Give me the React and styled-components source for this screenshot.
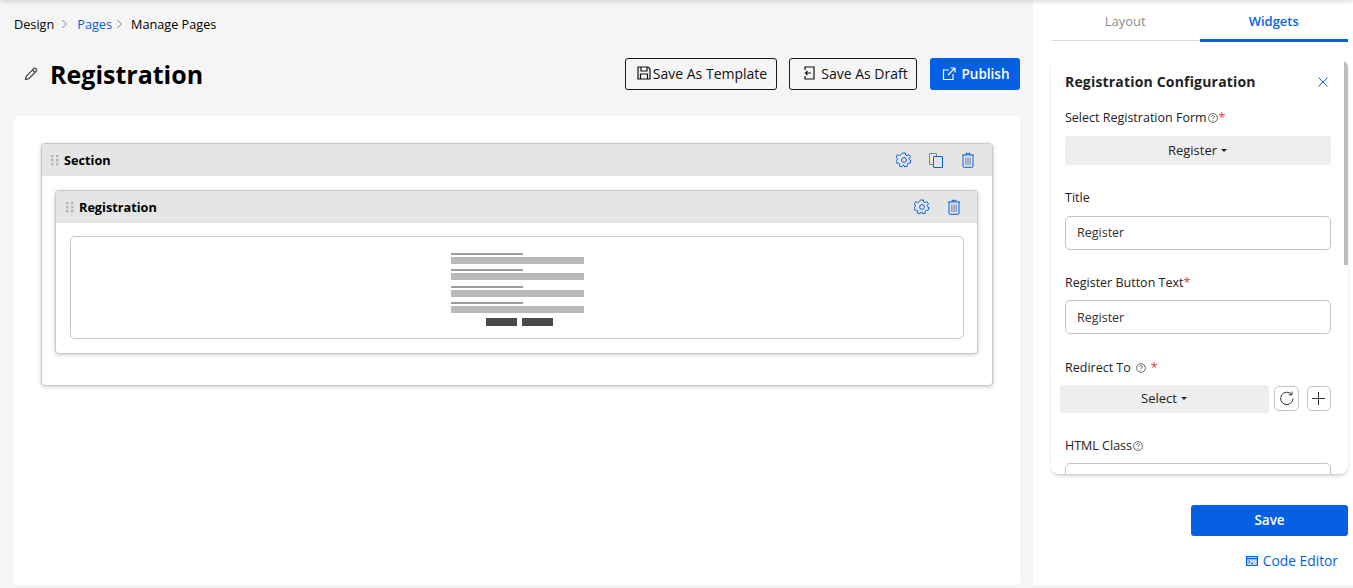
import React from 'react';
import styled, { createGlobalStyle } from 'styled-components';

const blue = '#0560e3';

const Global = createGlobalStyle`
  html, body { margin: 0; padding: 0; height: 100%; overflow: hidden; }
  body { font-family: "Open Sans", "Noto Sans", sans-serif; background: #f5f5f5; color: #000; }
  * { box-sizing: border-box; }
`;

const Page = styled.div`
  position: relative;
  display: flex;
  width: 1353px;
  height: 588px;
  overflow: hidden;
  &:before {
    content: '';
    position: absolute;
    top: -4px;
    left: 0;
    right: 0;
    height: 4px;
    box-shadow: 0 1px 5px rgba(0, 0, 0, 0.2);
    z-index: 3;
  }
`;

const Main = styled.main`
  width: 1033px;
  height: 588px;
  padding: 15px 13px 0 14px;
  display: flex;
  flex-direction: column;
`;

const Crumbs = styled.nav`
  display: flex;
  align-items: center;
  height: 18px;
  font-size: 12.7px;
  line-height: 18px;
`;

const Crumb = styled.span`
  color: ${p => (p.$link ? blue : '#000')};
`;

const CrumbGap = styled.svg`
  width: ${p => p.$w}px;
  height: 12px;
  fill: none;
  stroke: #8a8a8a;
  stroke-width: 1;
`;

const TitleRow = styled.div`
  display: flex;
  align-items: center;
  height: 34px;
  margin-top: 24px;
  padding-left: 10px;
`;

const Title = styled.h1`
  margin: 0 0 0 12px;
  font-size: 25px;
  line-height: 34px;
  font-weight: 700;
  flex: 1;
`;

const OutlineBtn = styled.button`
  display: flex;
  align-items: center;
  justify-content: center;
  gap: ${p => p.$gap}px;
  width: ${p => p.$w}px;
  height: 32px;
  margin-right: ${p => p.$mr}px;
  padding: 0 0 2px ${p => p.$pl}px;
  border: 1px solid #1a1a1a;
  border-radius: 3px;
  background: transparent;
  color: #111;
  font: 500 14px "Open Sans", sans-serif;
`;

const PublishBtn = styled.button`
  display: flex;
  align-items: center;
  justify-content: center;
  gap: 6px;
  width: 90px;
  height: 32px;
  padding: 0 0 1px 1px;
  border: 0;
  border-radius: 3px;
  background: ${blue};
  color: #fff;
  font: 600 13.5px "Open Sans", sans-serif;
`;

const Canvas = styled.section`
  margin-top: 25px;
  width: 1006px;
  height: 469px;
  padding: 27px 27px 0;
  background: #fff;
  border-radius: 5px;
`;

const Block = styled.div`
  border: 1px solid #c9c9c9;
  border-radius: 4px;
  background: #fff;
  box-shadow: 0 1px 4px rgba(0, 0, 0, 0.2);
`;

const SectionBlock = styled(Block)`
  width: 952px;
  height: 243px;
`;

const WidgetBlock = styled(Block)`
  width: 923px;
  height: 164px;
  margin: 14px 0 0 13px;
`;

const BlockHead = styled.div`
  display: flex;
  align-items: center;
  height: 32px;
  padding: 0 ${p => p.$right}px 0 ${p => p.$left}px;
  background: #e5e5e5;
  border-radius: 3px 3px 0 0;
`;

const Grip = styled.svg`
  width: 8px;
  height: 12px;
  margin-right: 5px;
  fill: #b4b4b4;
`;

const BlockName = styled.span`
  flex: 1;
  font-size: 12.7px;
  font-weight: 700;
  line-height: 18px;
`;

const HeadIcon = styled.svg`
  width: 16px;
  height: 16px;
  margin-left: 16px;
  fill: none;
  stroke: ${blue};
  stroke-width: 1;
`;

const Preview = styled.div`
  display: flex;
  justify-content: center;
  height: 103px;
  margin: 13px 13px 0 14px;
  padding-top: 16px;
  border: 1px solid #c8c8c8;
  border-radius: 5px;
`;

const Wire = styled.svg`
  width: 133px;
  height: 74px;
`;

const Side = styled.aside`
  width: 320px;
  height: 585px;
  background: #fff;
  padding: 0 5px 0 18px;
  display: flex;
  flex-direction: column;
`;

const Tabs = styled.div`
  display: flex;
  height: 41px;
  border-bottom: 1px solid #dcdcdc;
`;

const Tab = styled.div`
  flex: 1;
  height: 42px;
  padding-top: 12px;
  text-align: center;
  font-size: 13px;
  line-height: 18px;
  font-weight: ${p => (p.$active ? 600 : 400)};
  color: ${p => (p.$active ? blue : '#8b8b8b')};
  border-bottom: ${p => (p.$active ? `3px solid ${blue}` : '0')};
`;

const Config = styled.div`
  position: relative;
  height: 414px;
  margin-top: 19px;
  padding: 13px 17px 0 14px;
  overflow: hidden;
  border-radius: 8px;
  box-shadow: 0 3px 4px -2px rgba(0, 0, 0, 0.28), 0 0 3px rgba(0, 0, 0, 0.05);
`;

const Scroll = styled.div`
  position: absolute;
  top: 0;
  right: 0;
  width: 4px;
  height: 205px;
  background: #bdbdbd;
`;

const ConfigHead = styled.div`
  display: flex;
  align-items: center;
  justify-content: space-between;
  height: 18px;
`;

const ConfigTitle = styled.h2`
  margin: 0;
  font-size: 14px;
  line-height: 18px;
  font-weight: 700;
  letter-spacing: 0.18px;
  color: #222;
`;

const Close = styled.svg`
  width: 12px;
  height: 12px;
  margin-right: 2px;
  fill: none;
  stroke: ${blue};
  stroke-width: 1;
`;

const Label = styled.div`
  display: flex;
  align-items: center;
  height: 18px;
  margin-top: ${p => p.$top}px;
  font-size: 12.5px;
  line-height: 18px;
  color: #222;
`;

const Star = styled.span`
  color: #e8344e;
  margin-left: ${p => p.$left || 0}px;
`;

const Help = styled.svg`
  width: 10px;
  height: 10px;
  margin: ${p => (p.$spaced ? '0 0 0 5px' : '0 0 0 1px')};
  fill: none;
  stroke: #444;
  stroke-width: 0.8;
`;

const Dropdown = styled.div`
  display: flex;
  align-items: center;
  justify-content: center;
  gap: 4px;
  height: ${p => p.$h}px;
  margin-top: ${p => p.$top}px;
  padding: 0 1px 2px 0;
  width: ${p => p.$w};
  flex: ${p => (p.$w ? 'none' : '1')};
  background: #eeeeee;
  border-radius: 3px;
  font-size: 13px;
  color: #222;
  &:after {
    content: '';
    margin-top: 1px;
    border-top: 3px solid #222;
    border-left: 3px solid transparent;
    border-right: 3px solid transparent;
  }
`;

const Input = styled.div`
  height: 34px;
  margin-top: ${p => p.$top}px;
  padding: 0 11px;
  border: 1px solid #c4c4c4;
  border-radius: 5px;
  font-size: 12.5px;
  line-height: ${p => p.$lh || 32}px;
  color: #333;
`;

const SelectRow = styled.div`
  display: flex;
  align-items: flex-start;
  margin: 8px 0 0 -5px;
`;

const SquareBtn = styled.div`
  display: flex;
  align-items: center;
  justify-content: center;
  width: 25px;
  height: 25px;
  margin: 1px 0 0 ${p => p.$left}px;
  border: 1px solid #c4c4c4;
  border-radius: 5px;
`;

const SquareIcon = styled.svg`
  width: 17px;
  height: 17px;
  fill: none;
  stroke: #333;
  stroke-width: 1;
`;

const SaveBtn = styled.button`
  display: block;
  width: 157px;
  height: 31px;
  margin: 31px 0 0 140px;
  padding: 0 0 2px;
  border: 0;
  border-radius: 3px;
  background: ${blue};
  color: #fff;
  font: 600 13.5px "Open Sans", sans-serif;
`;

const CodeLink = styled.div`
  display: flex;
  align-items: center;
  justify-content: flex-end;
  gap: 5px;
  margin-top: 15px;
  padding-right: 10px;
  font-size: 13.8px;
  line-height: 19px;
  font-weight: 500;
  color: ${blue};
`;

const BtnIcon = styled.svg`
  width: ${p => p.$s || 14}px;
  height: ${p => p.$s || 14}px;
  fill: none;
  stroke: currentColor;
  stroke-width: 1.2;
`;

const Pencil = styled.svg`
  width: 14px;
  height: 14px;
  fill: none;
  stroke: #3a3325;
  stroke-width: 1.1;
`;

const GripIcon = () => (
  <Grip viewBox="0 0 8 12">
    {[1, 5, 9].map(y => [1, 6].map(x => <rect key={`${x}-${y}`} x={x - 1} y={y} width="2.4" height="2.4" />))}
  </Grip>
);

const Gear = () => (
  <HeadIcon viewBox="0 0 16 16">
    <circle cx="8" cy="8" r="2.4" />
    <path d="M6.7 1h2.6l.4 2 1.3.6 1.8-1 1.7 2.2-1.3 1.5.2 1.4 1.6 1-.8 2.5-2 0-1 1 .2 2-2.6.7-1-1.8H7l-1.1 1.8-2.5-.8.2-2-1-1-2 .1-.8-2.5 1.6-1.1V6.3L.1 4.9 1.6 2.6l1.9.9 1.1-.6z" strokeLinejoin="round" />
  </HeadIcon>
);

const Copy = () => (
  <HeadIcon viewBox="0 0 16 16">
    <path d="M5 12.500H1.500V1.500h7V4" stroke="#5b84dd" />
    <rect x="5.500" y="4.500" width="9" height="11" rx=".5" />
  </HeadIcon>
);

const Trash = () => (
  <HeadIcon viewBox="0 0 16 16">
    <path d="M2 3h12M6 3V1.300h4V3M3 3v11.200c0 .7.400 1.100 1 1.100h8c.6 0 1-.4 1-1.100V3" />
    <path d="M5.800 5.500v7.500M8 5.500v7.500M10.200 5.500v7.500" stroke="#7a8fc8" strokeWidth="1.3" />
  </HeadIcon>
);

const HelpIcon = ({ spaced }) => (
  <Help viewBox="0 0 10 10" $spaced={spaced}>
    <circle cx="5" cy="5" r="4.400" />
    <path d="M3.600 4c0-1.800 2.900-1.800 2.900-.1 0 1-1.500 1-1.500 2.100M5 7v.8" />
  </Help>
);

const wireRows = [0, 16, 33, 49];

const FormWire = () => (
  <Wire viewBox="0 0 133 74">
    {wireRows.map(y => (
      <g key={y}>
        <rect x="0" y={y} width="72" height="2" fill="#9c9c9c" />
        <rect x="0" y={y + 4} width="133" height="7" fill="#b9b9b9" />
      </g>
    ))}
    <rect x="35" y="65" width="31" height="8" fill="#4a4a4a" />
    <rect x="71" y="65" width="31" height="8" fill="#4a4a4a" />
  </Wire>
);

const App = () => (
  <Page>
    <Global />
    <Main>
      <Crumbs>
        <Crumb>Design</Crumb>
        <CrumbGap $w={23} viewBox="0 0 23 12"><path d="M8 2l4.500 4L8 10" /></CrumbGap>
        <Crumb $link>Pages</Crumb>
        <CrumbGap $w={19} viewBox="0 0 19 12"><path d="M5 2l4.500 4L5 10" /></CrumbGap>
        <Crumb>Manage Pages</Crumb>
      </Crumbs>

      <TitleRow>
        <Pencil viewBox="0 0 14 14">
          <path d="M1.500 12.500l.8-3.300L9.800 1.700c.6-.6 1.400-.6 2 0l.5.5c.6.6.6 1.400 0 2l-7.500 7.500zM8.600 3l2.400 2.400" />
        </Pencil>
        <Title>Registration</Title>
        <OutlineBtn $w={152} $gap={2} $pl={2} $mr={12}>
          <BtnIcon viewBox="0 0 14 14" $s={14}>
            <path d="M1 1h10l2 2v10H1zM4 1v4h6V1M3.500 13V8h7v5" />
          </BtnIcon>
          Save As Template
        </OutlineBtn>
        <OutlineBtn $w={128} $gap={5} $pl={4} $mr={13}>
          <BtnIcon viewBox="0 0 14 14" $s={14}>
            <path d="M3 4V1h9v12H3v-3M9 7H3.500M5.500 5L3.500 7l2 2" />
          </BtnIcon>
          Save As Draft
        </OutlineBtn>
        <PublishBtn>
          <BtnIcon viewBox="0 0 14 14" $s={14}>
            <path d="M7 3H1.500v9.500H11V7M8.500 1H13v4.500M13 1L6 8" />
          </BtnIcon>
          Publish
        </PublishBtn>
      </TitleRow>

      <Canvas>
        <SectionBlock>
          <BlockHead $left={9} $right={16}>
            <GripIcon />
            <BlockName>Section</BlockName>
            <Gear />
            <Copy />
            <Trash />
          </BlockHead>
          <WidgetBlock>
            <BlockHead $left={10} $right={15}>
              <GripIcon />
              <BlockName>Registration</BlockName>
              <Gear />
              <Trash />
            </BlockHead>
            <Preview>
              <FormWire />
            </Preview>
          </WidgetBlock>
        </SectionBlock>
      </Canvas>
    </Main>

    <Side>
      <Tabs>
        <Tab>Layout</Tab>
        <Tab $active>Widgets</Tab>
      </Tabs>

      <Config>
        <Scroll />
        <ConfigHead>
          <ConfigTitle>Registration Configuration</ConfigTitle>
          <Close viewBox="0 0 12 12"><path d="M1.500 1.500l9 9M10.500 1.500l-9 9" /></Close>
        </ConfigHead>

        <Label $top={18}>Select Registration Form<HelpIcon /><Star $left={1}>*</Star></Label>
        <Dropdown $h={29} $top={9}>Register</Dropdown>

        <Label $top={24}>Title</Label>
        <Input $top={9}>Register</Input>

        <Label $top={24}>Register Button Text<Star>*</Star></Label>
        <Input $top={8} $lh={34}>Register</Input>

        <Label $top={25}>Redirect To<HelpIcon spaced /><Star $left={5}>*</Star></Label>
        <SelectRow>
          <Dropdown $h={28} $top={0} $w="209px">Select</Dropdown>
          <SquareBtn $left={5}>
            <SquareIcon viewBox="0 0 17 17">
              <path d="M13.600 4.500a6.200 6.200 0 1 0 1.400 4M14 1.500v3.300h-3.300" />
            </SquareIcon>
          </SquareBtn>
          <SquareBtn $left={8}>
            <SquareIcon viewBox="0 0 17 17"><path d="M8.500 2v13M2 8.500h13" /></SquareIcon>
          </SquareBtn>
        </SelectRow>

        <Label $top={24}>HTML Class<HelpIcon /></Label>
        <Input $top={8} />
      </Config>

      <SaveBtn>Save</SaveBtn>
      <CodeLink>
        <BtnIcon viewBox="0 0 12 12" $s={12}>
          <path d="M.6 1.500h10.800v9H.6z" fill="#c3d6f6" />
          <path d="M.6 3.600h10.800" />
          <path d="M2.500 5.500l1.500 1.300-1.500 1.300M5 8.300h2" strokeWidth="1" />
        </BtnIcon>
        Code Editor
      </CodeLink>
    </Side>
  </Page>
);

export default App;
